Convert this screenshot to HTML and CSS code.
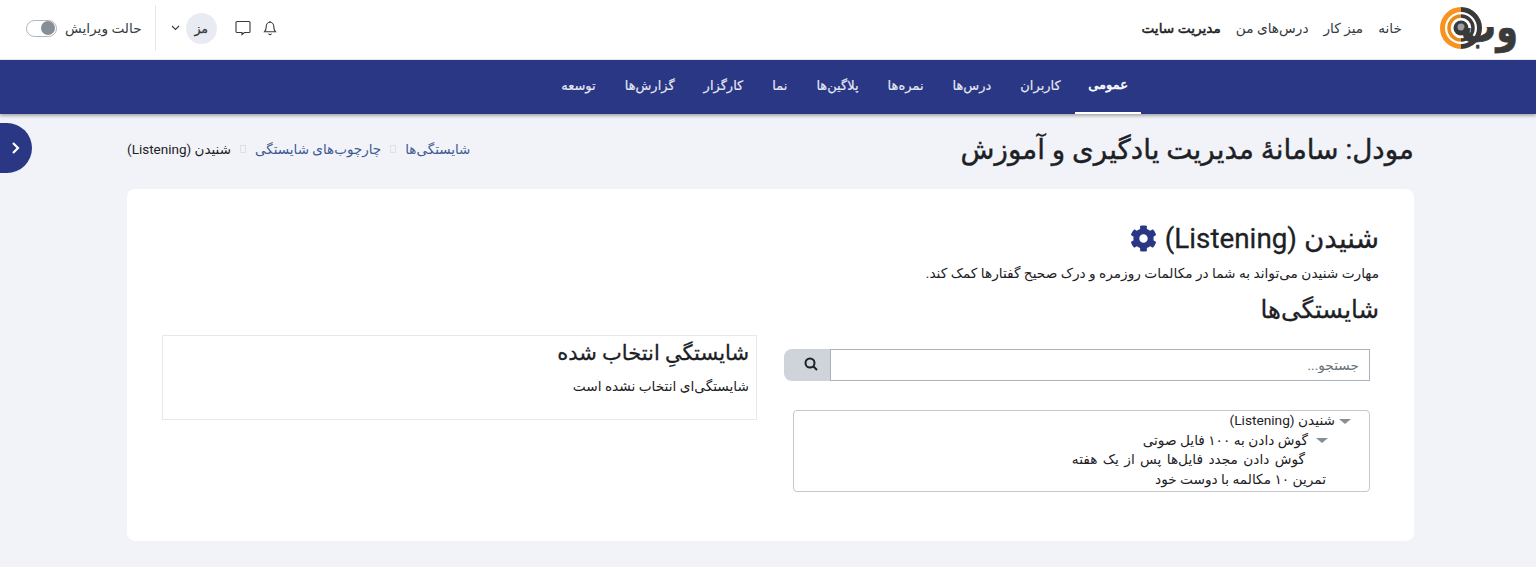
FILE: index.html
```html
<!DOCTYPE html>
<html lang="fa" dir="rtl">
<head>
    <meta charset="UTF-8">
    <meta name="viewport" content="width=device-width, initial-scale=1.0">
    <title>شنیدن (Listening)</title>
    <link rel="stylesheet" href="styles.css">
</head>
<body>
    <header class="topbar">
        <div class="topbar-right">
            <a class="logo" href="#">
                <span class="logo-text">وب</span>
                <svg class="logo-mark" width="42" height="42" viewBox="0 0 42 42" fill="none">
                    <path d="M21 2.500a18.500 18.500 0 0 0 0 37" stroke="#f7931e" stroke-width="5"/>
                    <path d="M21 2.500a18.500 18.500 0 0 1 0 37" stroke="#3a3a3a" stroke-width="5"/>
                    <path d="M21 9a12 12 0 0 0 0 24" stroke="#e88a17" stroke-width="3.500"/>
                    <path d="M21 9a12 12 0 0 1 0 24" stroke="#3a3a3a" stroke-width="3.500"/>
                    <circle cx="21" cy="21" r="7.500" fill="#3a3a3a"/>
                    <circle cx="21" cy="20" r="3.500" fill="#9aa0a6"/>
                </svg>
            </a>
            <nav class="topnav">
                <a href="#">خانه</a>
                <a href="#">میز کار</a>
                <a href="#">درس‌های من</a>
                <a href="#" class="active">مدیریت سایت</a>
            </nav>
        </div>
        <div class="topbar-left">
            <svg class="icon-btn" width="16" height="16" viewBox="0 0 16 16" fill="none" stroke="#343a40" stroke-width="1.1">
                <path d="M2.500 11.800h11c-1.200-1.200-1.700-2.400-1.700-5 0-2.400-1.600-4.600-3.800-4.600S4.200 4.400 4.200 6.800c0 2.600-.5 3.800-1.700 5z"/>
                <path d="M6.500 13.600c.3.700.9 1 1.500 1s1.200-.3 1.500-1"/>
                <path d="M8 1v1.200"/>
            </svg>
            <svg class="icon-btn msg" width="16" height="16" viewBox="0 0 16 16" fill="none" stroke="#343a40" stroke-width="1.1">
                <path d="M2 1.500h12a1 1 0 0 1 1 1v9a1 1 0 0 1-1 1H9.500l-2.500 2v-2H2a1 1 0 0 1-1-1v-9a1 1 0 0 1 1-1z"/>
            </svg>
            <div class="user-menu">
                <span class="avatar">مز</span>
                <svg width="9" height="6" viewBox="0 0 9 6" fill="none" stroke="#343a40" stroke-width="1.1"><path d="M1 1l3.500 3.500L8 1"/></svg>
            </div>
            <div class="edit-mode">
                <span>حالت ویرایش</span>
                <span class="switch"><span class="knob"></span></span>
            </div>
        </div>
    </header>

    <nav class="mainnav">
        <a href="#" class="active">عمومی</a>
        <a href="#">کاربران</a>
        <a href="#">درس‌ها</a>
        <a href="#">نمره‌ها</a>
        <a href="#">پلاگین‌ها</a>
        <a href="#">نما</a>
        <a href="#">کارگزار</a>
        <a href="#">گزارش‌ها</a>
        <a href="#">توسعه</a>
    </nav>

    <button class="drawer-toggle" type="button">
        <svg width="10" height="14" viewBox="0 0 10 14" fill="none" stroke="#fff" stroke-width="2.200"><path d="M2 2l5 5-5 5"/></svg>
    </button>

    <main class="page">
        <div class="page-head">
            <h1>مودل: سامانهٔ مدیریت یادگیری و آموزش</h1>
            <ol class="breadcrumb">
                <li><a href="#">شایستگی‌ها</a></li>
                <li class="sep"></li>
                <li><a href="#">چارچوب‌های شایستگی</a></li>
                <li class="sep"></li>
                <li>شنیدن (Listening)</li>
            </ol>
        </div>

        <section class="card">
            <h2 class="framework-title">
                شنیدن (Listening)
                <svg class="gear" width="27" height="27" viewBox="0 0 512 512">
                    <path fill="#2a3785" d="M487.4 315.700l-42.600-24.600c4.300-23.200 4.300-47 0-70.200l42.600-24.600c4.900-2.800 7.100-8.600 5.500-14-11.100-35.600-30-67.800-54.700-94.600-3.800-4.100-10-5.100-14.800-2.300L380.800 110c-17.900-15.400-38.500-27.300-60.800-35.100V25.800c0-5.600-3.900-10.500-9.400-11.700-36.700-8.200-74.300-7.800-109.200 0-5.500 1.200-9.400 6.100-9.400 11.700V75c-22.200 7.900-42.800 19.800-60.800 35.100L88.700 85.500c-4.900-2.800-11-1.900-14.800 2.300-24.700 26.700-43.600 58.900-54.700 94.600-1.700 5.400.6 11.200 5.500 14L67.300 221c-4.300 23.200-4.300 47 0 70.200l-42.600 24.600c-4.900 2.800-7.100 8.600-5.500 14 11.100 35.600 30 67.800 54.700 94.600 3.800 4.100 10 5.100 14.800 2.300l42.600-24.600c17.900 15.400 38.500 27.300 60.800 35.100v49.200c0 5.600 3.900 10.500 9.400 11.700 36.700 8.200 74.300 7.800 109.200 0 5.500-1.200 9.400-6.100 9.400-11.700v-49.200c22.200-7.900 42.800-19.800 60.800-35.100l42.600 24.600c4.900 2.800 11 1.900 14.800-2.300 24.700-26.700 43.600-58.900 54.700-94.600 1.500-5.500-.7-11.300-5.600-14.100zM256 336c-44.100 0-80-35.900-80-80s35.900-80 80-80 80 35.900 80 80-35.900 80-80 80z"/>
                </svg>
            </h2>
            <p class="framework-desc">مهارت شنیدن می‌تواند به شما در مکالمات روزمره و درک صحیح گفتارها کمک کند.</p>
            <h3 class="section-title">شایستگی‌ها</h3>

            <div class="columns">
                <div class="tree-col">
                    <form class="search">
                        <input type="text" placeholder="جستجو...">
                        <button type="button">
                            <svg width="14" height="14" viewBox="0 0 14 14" fill="none" stroke="#1d2125" stroke-width="2"><circle cx="6" cy="6" r="4.500"/><path d="M9.500 9.500L13 13"/></svg>
                        </button>
                    </form>
                    <ul class="tree">
                        <li><span class="arrow"></span>شنیدن (Listening)</li>
                        <li class="level-2"><span class="arrow"></span>گوش دادن به ۱۰۰ فایل صوتی</li>
                        <li class="level-3">گوش دادن مجدد فایل‌ها پس از یک هفته</li>
                        <li class="level-4">تمرین ۱۰ مکالمه با دوست خود</li>
                    </ul>
                </div>
                <div class="selected-box">
                    <h4>شایستگیِ انتخاب شده</h4>
                    <p>شایستگی‌ای انتخاب نشده است</p>
                </div>
            </div>
        </section>
    </main>
</body>
</html>
```

FILE: styles.css
```css
* {
    box-sizing: border-box;
}
body {
    margin: 0;
    height: 567px;
    overflow: hidden;
    background-color: #f1f3f8;
    color: #1d2125;
    font-family: Roboto, "DejaVu Sans", sans-serif;
    font-size: 13.7px;
}
a {
    color: inherit;
    text-decoration: none;
}

/* top bar */
.topbar {
    display: flex;
    justify-content: space-between;
    align-items: center;
    height: 60px;
    padding: 0 18px 3px 26px;
    background-color: #fff;
    border-bottom: 1px solid #e9ebf2;
}
.topbar-right,
.topbar-left,
.topnav,
.user-menu,
.edit-mode,
.logo {
    display: flex;
    align-items: center;
}
.logo {
    width: 78px;
}
.logo-text {
    flex-shrink: 0;
    font-size: 35px;
    font-weight: 700;
    color: #3a3a3a;
    line-height: 42px;
    margin-left: -21px;
    transform: scaleY(1.25);
    -webkit-text-stroke: 0.6px #3a3a3a;
}
.logo-mark {
    flex-shrink: 0;
}
.topnav {
    margin-right: 38px;
    gap: 15px;
    color: #343a40;
}
.topnav .active {
    color: #1d2125;
    -webkit-text-stroke: 0.5px #1d2125;
}
.icon-btn.msg {
    margin-right: 11px;
}
.user-menu {
    gap: 6px;
    margin-right: 18px;
    padding-left: 15px;
    height: 46px;
    border-left: 1px solid #e3e6ee;
}
.avatar {
    display: flex;
    align-items: center;
    justify-content: center;
    width: 31px;
    height: 31px;
    border-radius: 50%;
    background-color: #e9ebf2;
    font-size: 12.500px;
    -webkit-text-stroke: 0.3px #343a40;
    color: #343a40;
}
.edit-mode {
    gap: 8px;
    margin-right: 13px;
    color: #343a40;
}
.switch {
    display: flex;
    align-items: center;
    width: 31px;
    height: 17px;
    border: 1px solid #adb5bd;
    border-radius: 9px;
    background-color: #fff;
    padding: 1px;
}
.knob {
    width: 14px;
    height: 14px;
    border-radius: 50%;
    background-color: #868e96;
}

/* main nav */
.mainnav {
    display: flex;
    height: 54px;
    padding-right: 395px;
    background-color: #2a3785;
    box-shadow: 0 2px 3px rgba(0, 0, 0, 0.3);
}
.mainnav a {
    display: flex;
    align-items: center;
    padding: 0 14.500px 4px;
    color: #e8eaf4;
    font-size: 13px;
    -webkit-text-stroke: 0.15px #e8eaf4;
}
.mainnav .active {
    padding-left: 13px;
    padding-right: 13px;
    color: #fff;
    -webkit-text-stroke: 0.5px #fff;
    border-bottom: 2px solid #fff;
}

.drawer-toggle {
    position: absolute;
    left: 0;
    top: 123px;
    display: flex;
    align-items: center;
    justify-content: center;
    width: 32px;
    height: 50px;
    padding: 0;
    border: none;
    border-radius: 0 25px 25px 0;
    background-color: #2a3785;
}

/* page */
.page {
    padding: 0 122px 0 127px;
}
.page-head {
    display: flex;
    justify-content: space-between;
    align-items: center;
    height: 75px;
    padding-bottom: 4px;
}
h1 {
    margin: 0;
    font-size: 27.800px;
    font-weight: 400;
    -webkit-text-stroke: 0.4px #1d2125;
}
.breadcrumb {
    display: flex;
    align-items: center;
    gap: 9px;
    list-style: none;
    margin: 0 0 2px;
    padding: 0;
    font-size: 13.500px;
}
.breadcrumb a {
    color: #3f5b94;
}
.sep {
    width: 6px;
    height: 8px;
    border: 1px solid #dde0e6;
}
.card {
    height: 352px;
    padding: 31px 35px 0 35px;
    background-color: #fff;
    border-radius: 8px;
}
.framework-title {
    display: flex;
    align-items: center;
    gap: 8px;
    margin: 0;
    height: 36px;
    font-size: 27.800px;
    font-weight: 400;
    -webkit-text-stroke: 0.3px #1d2125;
}
.framework-desc {
    margin: 7px 0 0;
    line-height: 20px;
}
.section-title {
    margin: 12px 0 0;
    font-size: 24.500px;
    font-weight: 400;
    line-height: 30px;
    -webkit-text-stroke: 0.3px #1d2125;
}
.columns {
    display: flex;
    justify-content: space-between;
    margin-top: 10px;
}
.tree-col {
    width: 586px;
    margin-right: 9px;
    padding-top: 14px;
}
.search {
    display: flex;
    height: 32px;
}
.search input {
    flex: 1;
    min-width: 0;
    padding: 0 10px;
    border: 1px solid #a9b1bb;
    font: inherit;
    outline: none;
}
.search input::placeholder {
    color: #6a737b;
}
.search button {
    width: 46px;
    border: none;
    padding: 0 0 0 7px;
    border-radius: 8px 0 0 8px;
    background-color: #ced4da;
}
.tree {
    list-style: none;
    width: 577px;
    height: 82px;
    margin: 29px 0 0;
    padding: 0 18px 0 0;
    border: 1px solid #c4c9d0;
    border-radius: 4px;
    line-height: 19.500px;
}
.arrow {
    display: inline-block;
    width: 0;
    height: 0;
    margin-left: 4px;
    vertical-align: middle;
    border: 6px solid transparent;
    border-top: 5px solid #868e96;
    border-bottom: none;
}
.level-2 {
    padding-right: 23px;
}
.level-2 .arrow {
    margin-left: 8px;
}
.level-3 {
    padding-right: 46px;
    word-spacing: 2px;
}
.level-4 {
    padding-right: 25px;
}
.selected-box {
    width: 595px;
    height: 85px;
    padding: 4px 7px 0 0;
    border: 1px solid #e6e8ef;
}
.selected-box h4 {
    margin: 0;
    font-size: 21px;
    font-weight: 400;
    line-height: 26px;
    -webkit-text-stroke: 0.3px #1d2125;
}
.selected-box p {
    margin: 10px 0 0;
    line-height: 20px;
}
```
